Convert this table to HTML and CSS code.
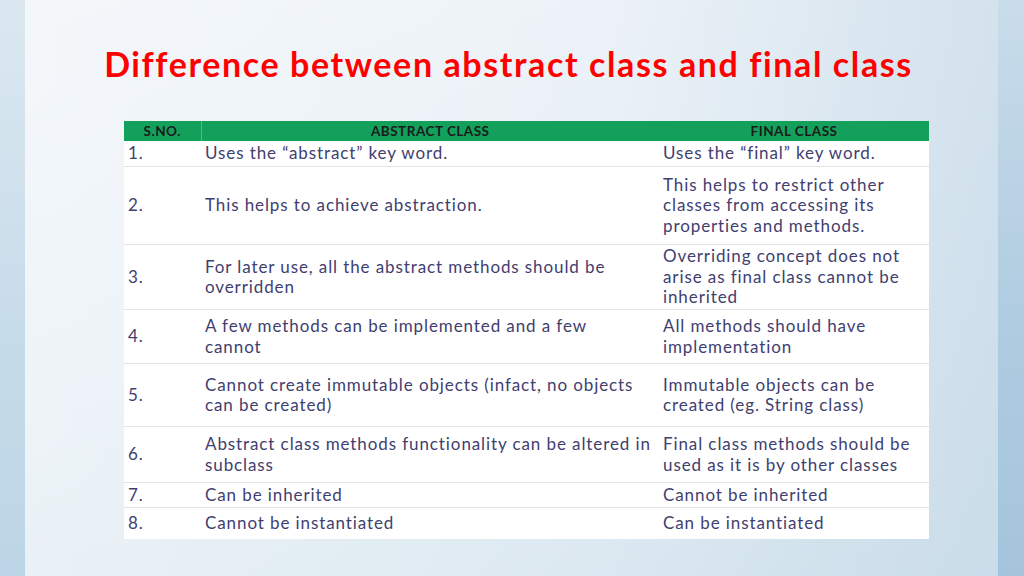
FILE: index.html
```html
<!DOCTYPE html>
<html>
<head>
<meta charset="utf-8">
<link rel="stylesheet" href="styles.css">
</head>
<body>
<div class="slide">
  <div class="strip-left"></div>
  <main class="main">
    <h1 class="title">Difference between abstract class and final class</h1>
    <table class="cmp">
      <colgroup>
        <col class="c1"><col class="c2"><col class="c3">
      </colgroup>
      <thead>
        <tr class="head"><th>S.NO.</th><th class="sep">ABSTRACT CLASS</th><th>FINAL CLASS</th></tr>
      </thead>
      <tbody>
        <tr class="r1"><td>1.</td><td>Uses the “abstract” key word.</td><td>Uses the “final” key word.</td></tr>
        <tr class="r2"><td>2.</td><td>This helps to achieve abstraction.</td><td>This helps to restrict other<br>classes from accessing its<br>properties and methods.</td></tr>
        <tr class="r3"><td>3.</td><td>For later use, all the abstract methods should be<br>overridden</td><td>Overriding concept does not<br>arise as final class cannot be<br>inherited</td></tr>
        <tr class="r4"><td>4.</td><td>A few methods can be implemented and a few<br>cannot</td><td>All methods should have<br>implementation</td></tr>
        <tr class="r5"><td>5.</td><td>Cannot create immutable objects (infact, no objects<br>can be created)</td><td>Immutable objects can be<br>created (eg. String class)</td></tr>
        <tr class="r6"><td>6.</td><td>Abstract class methods functionality can be altered in<br>subclass</td><td>Final class methods should be<br>used as it is by other classes</td></tr>
        <tr class="r7"><td>7.</td><td>Can be inherited</td><td>Cannot be inherited</td></tr>
        <tr class="r8"><td>8.</td><td>Cannot be instantiated</td><td>Can be instantiated</td></tr>
      </tbody>
    </table>
  </main>
  <div class="strip-right"></div>
</div>
</body>
</html>
```
FILE: styles.css
```css
html, body {
  margin: 0;
  padding: 0;
}
body {
  width: 1024px;
  height: 576px;
  overflow: hidden;
  font-family: "Lato", "Noto Sans", sans-serif;
}
.slide {
  display: flex;
  width: 1024px;
  height: 576px;
  background: linear-gradient(160deg, #f1f5f9 0%, #e8f0f6 45%, #d6e5ef 100%);
}
.strip-left {
  width: 25px;
  flex: none;
  background: linear-gradient(180deg, #dbe8f1 0%, #c6dbe9 60%, #bcd5e6 100%);
}
.strip-right {
  width: 26px;
  flex: none;
  background: linear-gradient(180deg, #c9dcea 0%, #aecbe0 60%, #a5c4dc 100%);
}
.main {
  flex: 1;
  display: flex;
  flex-direction: column;
  align-items: flex-start;
  background: linear-gradient(90deg, rgba(255,255,255,0.25) 0%, rgba(255,255,255,0) 60%, rgba(190,212,228,0.5) 100%);
}
.title {
  margin: 44px 0 0 0;
  width: 973px;
  text-align: center;
  color: #ff0000;
  font-family: "Lato", sans-serif;
  font-weight: 700;
  font-size: 34px;
  letter-spacing: 1.6px;
  line-height: 40px;
  height: 40px;
  position: relative;
  left: -3px;
}
.cmp {
  margin: 37px 0 0 99px;
  border-collapse: collapse;
  table-layout: fixed;
  width: 805px;
  background: #ffffff;
  color: #3f4070;
  font-size: 17px;
  letter-spacing: 0.9px;
  line-height: 20.5px;
}
.c1 { width: 77px; }
.c2 { width: 458px; }
.c3 { width: 270px; }
.cmp th {
  background: #13a05b;
  color: #1b1b1b;
  font-size: 13.5px;
  letter-spacing: 0.5px;
  font-weight: 700;
  height: 20px;
  padding: 0;
  line-height: 20px;
  text-align: center;
}
.cmp th.sep {
  border-left: 1px solid #4fbb84;
}
.cmp td {
  padding: 0 0 0 4px;
  vertical-align: middle;
  white-space: nowrap;
  border-top: 1px solid #e4e4e4;
}
.cmp tbody tr:first-child td { border-top: none; }
.r1 td { height: 25px; }
.r2 td { height: 77px; }
.r3 td { height: 64px; }
.r4 td { height: 53px; }
.r5 td { height: 62px; }
.r6 td { height: 55px; }
.r7 td { height: 24px; }
.r8 td { height: 31px; }
```
